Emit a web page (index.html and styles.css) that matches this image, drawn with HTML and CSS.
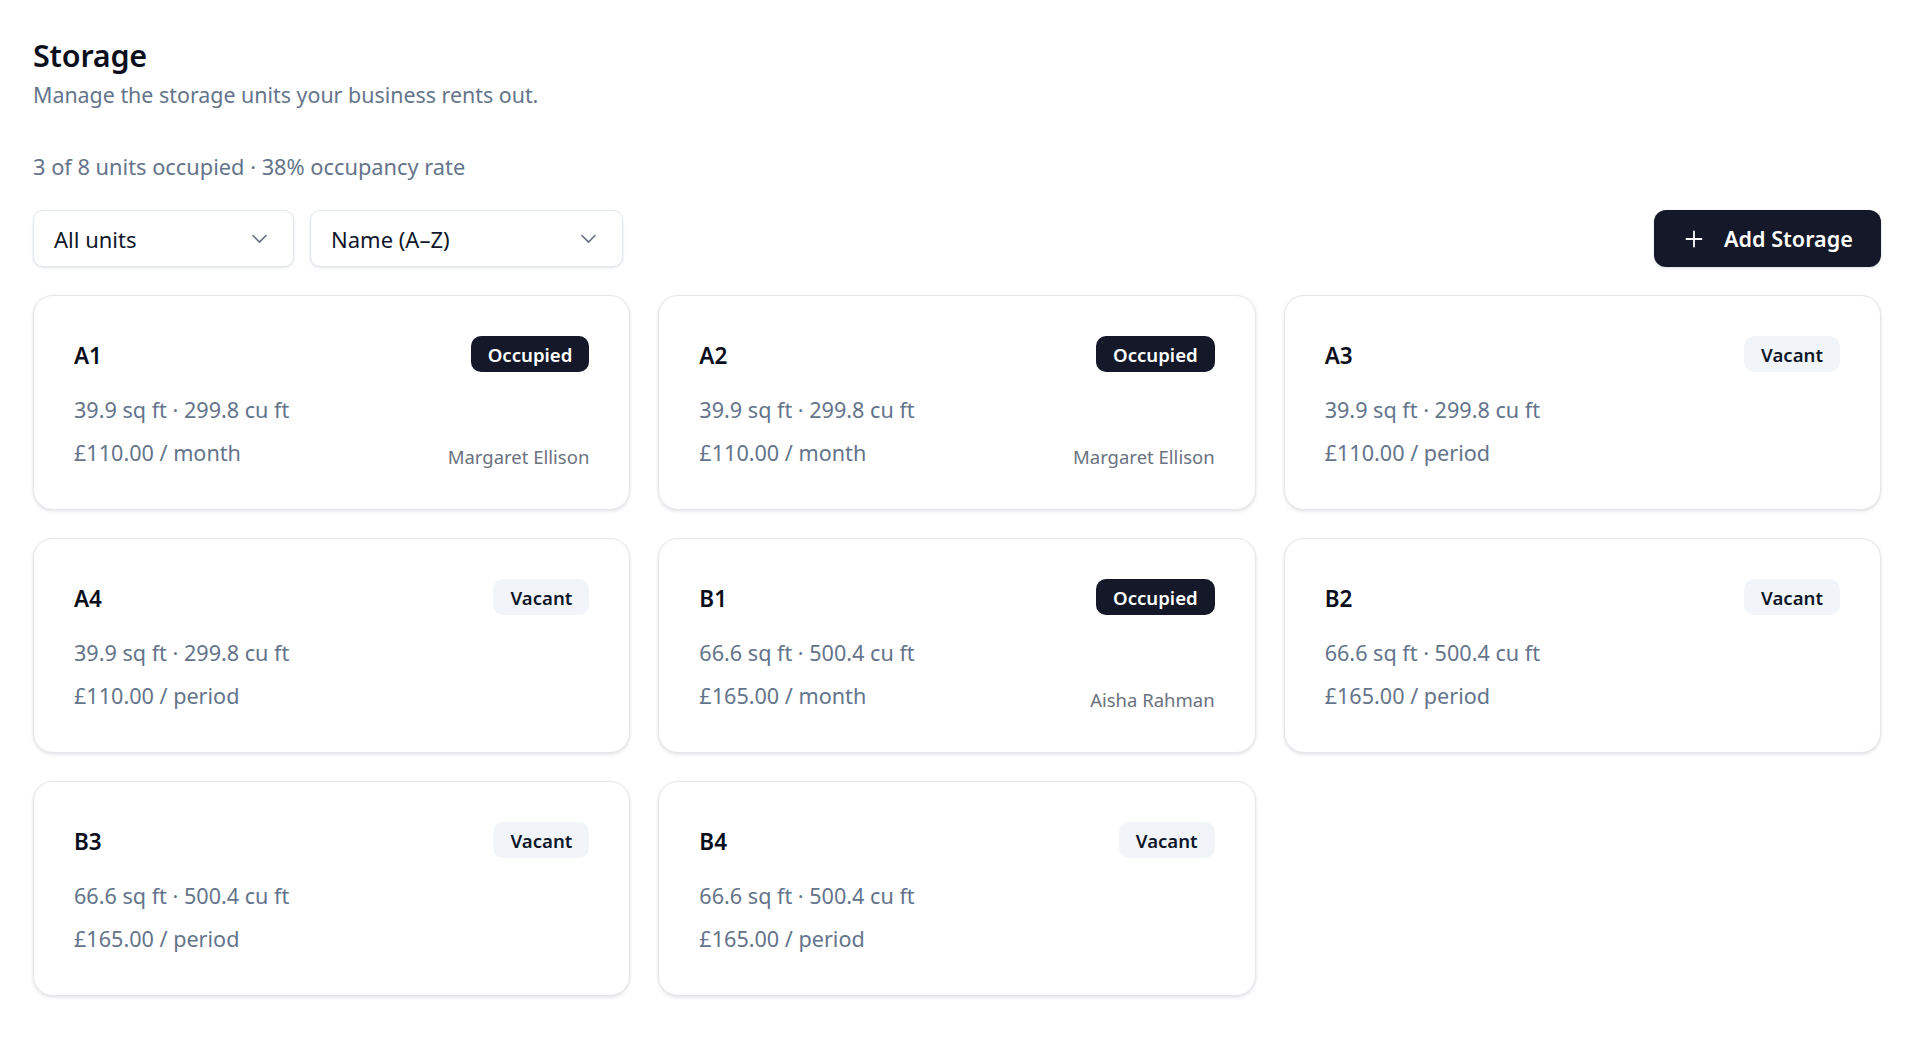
FILE: index.html
```html
<!DOCTYPE html>
<html lang="en">
<head>
<meta charset="utf-8">
<title>Storage</title>
<link rel="stylesheet" href="styles.css">
</head>
<body>
<main class="page">
  <header class="page-head">
    <h1 class="title">Storage</h1>
    <p class="subtitle">Manage the storage units your business rents out.</p>
  </header>
  <p class="stats">3 of 8 units occupied · 38% occupancy rate</p>

  <div class="toolbar">
    <div class="filters">
      <div class="select select-filter">
        <span>All units</span>
        <svg class="chev" viewBox="0 0 16 16" width="16" height="16"><path d="M2.5 5.5l5.5 5.5 5.5-5.5" fill="none" stroke="currentColor" stroke-width="1.4" stroke-linecap="round" stroke-linejoin="round"/></svg>
      </div>
      <div class="select select-sort">
        <span>Name (A–Z)</span>
        <svg class="chev" viewBox="0 0 16 16" width="16" height="16"><path d="M2.5 5.5l5.5 5.5 5.5-5.5" fill="none" stroke="currentColor" stroke-width="1.4" stroke-linecap="round" stroke-linejoin="round"/></svg>
      </div>
    </div>
    <button class="btn-add">
      <svg class="plus" viewBox="0 0 18 18" width="18" height="18"><path d="M9 1.5v15M1.5 9h15" fill="none" stroke="currentColor" stroke-width="1.8" stroke-linecap="round"/></svg>
      <span>Add Storage</span>
    </button>
  </div>

  <section class="grid">
    <article class="card">
      <div class="card-head"><h2 class="unit">A1</h2><span class="badge occupied">Occupied</span></div>
      <p class="line">39.9 sq ft · 299.8 cu ft</p>
      <div class="line-row"><span class="line">£110.00 / month</span><span class="tenant">Margaret Ellison</span></div>
    </article>
    <article class="card">
      <div class="card-head"><h2 class="unit">A2</h2><span class="badge occupied">Occupied</span></div>
      <p class="line">39.9 sq ft · 299.8 cu ft</p>
      <div class="line-row"><span class="line">£110.00 / month</span><span class="tenant">Margaret Ellison</span></div>
    </article>
    <article class="card">
      <div class="card-head"><h2 class="unit">A3</h2><span class="badge vacant">Vacant</span></div>
      <p class="line">39.9 sq ft · 299.8 cu ft</p>
      <div class="line-row"><span class="line">£110.00 / period</span></div>
    </article>
    <article class="card">
      <div class="card-head"><h2 class="unit">A4</h2><span class="badge vacant">Vacant</span></div>
      <p class="line">39.9 sq ft · 299.8 cu ft</p>
      <div class="line-row"><span class="line">£110.00 / period</span></div>
    </article>
    <article class="card">
      <div class="card-head"><h2 class="unit">B1</h2><span class="badge occupied">Occupied</span></div>
      <p class="line">66.6 sq ft · 500.4 cu ft</p>
      <div class="line-row"><span class="line">£165.00 / month</span><span class="tenant">Aisha Rahman</span></div>
    </article>
    <article class="card">
      <div class="card-head"><h2 class="unit">B2</h2><span class="badge vacant">Vacant</span></div>
      <p class="line">66.6 sq ft · 500.4 cu ft</p>
      <div class="line-row"><span class="line">£165.00 / period</span></div>
    </article>
    <article class="card">
      <div class="card-head"><h2 class="unit">B3</h2><span class="badge vacant">Vacant</span></div>
      <p class="line">66.6 sq ft · 500.4 cu ft</p>
      <div class="line-row"><span class="line">£165.00 / period</span></div>
    </article>
    <article class="card">
      <div class="card-head"><h2 class="unit">B4</h2><span class="badge vacant">Vacant</span></div>
      <p class="line">66.6 sq ft · 500.4 cu ft</p>
      <div class="line-row"><span class="line">£165.00 / period</span></div>
    </article>
  </section>
</main>
</body>
</html>
```

FILE: styles.css
```css
* { box-sizing: border-box; }

html, body {
  margin: 0;
  padding: 0;
  background: #ffffff;
}

body {
  font-family: "Noto Sans", "Open Sans", "Liberation Sans", sans-serif;
  color: #0f172a;
  -webkit-font-smoothing: antialiased;
}

.page {
  padding: 37px 39px 40px 33px;
}

.title {
  margin: 0;
  font-size: 30.5px;
  line-height: 36px;
  font-weight: 600;
  color: #0b0f1c;
  letter-spacing: -0.2px;
}

.subtitle {
  margin: 8px 0 0 0;
  font-size: 21.4px;
  line-height: 28px;
  color: #64748b;
}

.stats {
  margin: 44px 0 0 0;
  font-size: 21.8px;
  line-height: 28px;
  color: #64748b;
}

.toolbar {
  margin-top: 29px;
  display: flex;
  align-items: center;
  justify-content: space-between;
}

.filters {
  display: flex;
  gap: 16px;
}

.select {
  height: 57px;
  display: flex;
  align-items: center;
  justify-content: space-between;
  padding: 0 24px 0 20px;
  border: 1px solid #e2e8f0;
  border-radius: 10px;
  background: #fff;
  box-shadow: 0 1px 3px rgba(15, 23, 42, 0.08), 0 1px 2px rgba(15, 23, 42, 0.04);
  font-size: 22px;
  color: #0f172a;
}

.select-filter { width: 261px; }
.select-sort { width: 313px; }

.chev {
  color: #6b7280;
  width: 19px;
  height: 19px;
}

.btn-add {
  height: 57px;
  width: 227px;
  display: flex;
  align-items: center;
  gap: 21px;
  padding: 0 22px 0 31px;
  border: none;
  border-radius: 12px;
  background: #141829;
  color: #ffffff;
  font-family: inherit;
  font-size: 21.6px;
  font-weight: 600;
  box-shadow: 0 1px 3px rgba(15, 23, 42, 0.15);
}

.plus { width: 18px; height: 18px; }

.grid {
  margin-top: 28px;
  display: grid;
  grid-template-columns: repeat(3, 1fr);
  gap: 28px 28px;
}

.card {
  height: 215px;
  padding: 40px 40px 0 40px;
  border: 1px solid #e5e7eb;
  border-radius: 20px;
  background: #fff;
  box-shadow: 0 1px 3px rgba(15, 23, 42, 0.08), 0 2px 4px rgba(15, 23, 42, 0.05);
}

.card-head {
  height: 36px;
  display: flex;
  align-items: center;
  justify-content: space-between;
}

.unit {
  margin: 0;
  padding-top: 4px;
  font-size: 22.5px;
  line-height: 30px;
  font-weight: 600;
  color: #0b0f1c;
}

.badge {
  height: 36px;
  display: inline-flex;
  align-items: center;
  padding: 0 17px;
  border-radius: 10px;
  font-size: 18.6px;
  font-weight: 600;
}

.badge.occupied {
  background: #141829;
  color: #ffffff;
}

.badge.vacant {
  background: #f1f5f9;
  color: #0f172a;
}

.line {
  margin: 0;
  font-size: 21.6px;
  line-height: 30px;
  color: #64748b;
}

.card > .line { margin-top: 23px; }

.line-row {
  margin-top: 13px;
  display: flex;
  justify-content: space-between;
  align-items: baseline;
}

.tenant {
  font-size: 18.5px;
  color: #6b7280;
  position: relative;
  top: 3px;
}
```
